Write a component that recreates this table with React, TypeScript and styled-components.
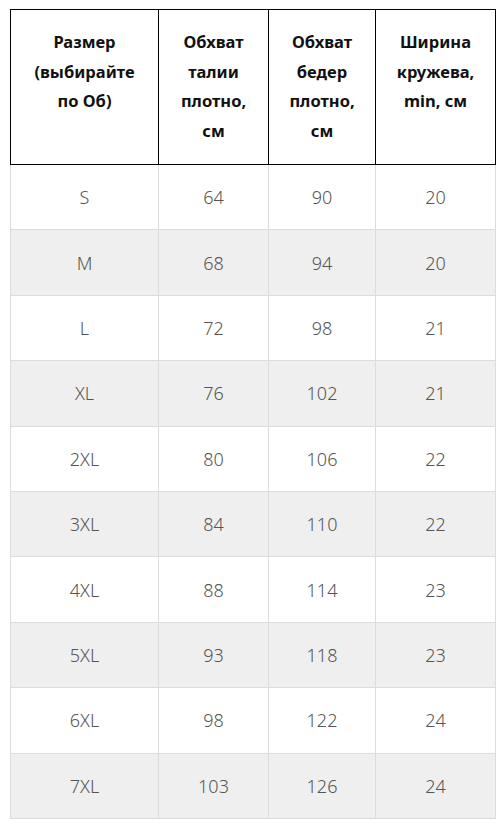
import styled, { createGlobalStyle } from "styled-components";

const GlobalStyle = createGlobalStyle`
  body {
    margin: 0;
    padding: 9px 8px 0 10px;
    background: #fff;
    font-family: "Noto Sans", "Liberation Sans", sans-serif;
  }
`;

interface Row {
  size: string;
  waist: number;
  hips: number;
  lace: number;
}

const rows: Row[] = [
  { size: "S", waist: 64, hips: 90, lace: 20 },
  { size: "M", waist: 68, hips: 94, lace: 20 },
  { size: "L", waist: 72, hips: 98, lace: 21 },
  { size: "XL", waist: 76, hips: 102, lace: 21 },
  { size: "2XL", waist: 80, hips: 106, lace: 22 },
  { size: "3XL", waist: 84, hips: 110, lace: 22 },
  { size: "4XL", waist: 88, hips: 114, lace: 23 },
  { size: "5XL", waist: 93, hips: 118, lace: 23 },
  { size: "6XL", waist: 98, hips: 122, lace: 24 },
  { size: "7XL", waist: 103, hips: 126, lace: 24 },
];

const headers = [
  ["Размер", "(выбирайте", "по Об)"],
  ["Обхват", "талии", "плотно,", "см"],
  ["Обхват", "бедер", "плотно,", "см"],
  ["Ширина", "кружева,", "min, см"],
];

const widths = [148, 110, 107, 120];

const App = () => {
  return (
    <>
      <GlobalStyle />
      <SizeTable>
        <colgroup>
          {widths.map((w, i) => (
            <col key={i} style={{ width: w }} />
          ))}
        </colgroup>
        <thead>
          <tr>
            {headers.map((lines, i) => (
              <HeadCell key={i}>
                {lines.map((l, j) => (
                  <div key={j}>{l}</div>
                ))}
              </HeadCell>
            ))}
          </tr>
        </thead>
        <tbody>
          {rows.map((r, i) => (
            <BodyRow key={r.size} $striped={i % 2 === 1}>
              <Cell>{r.size}</Cell>
              <Cell>{r.waist}</Cell>
              <Cell>{r.hips}</Cell>
              <Cell>{r.lace}</Cell>
            </BodyRow>
          ))}
        </tbody>
      </SizeTable>
    </>
  );
};

const SizeTable = styled.table`
  width: 485px;
  border-collapse: collapse;
  table-layout: fixed;
`;

const HeadCell = styled.th`
  border: 1px solid #000;
  vertical-align: top;
  text-align: center;
  padding: 17px 2px 18px;
  height: 119px;
  font-size: 16.5px;
  font-weight: 700;
  line-height: 29.5px;
  color: #111;
`;

const BodyRow = styled.tr<{ $striped: boolean }>`
  background: ${(p) => (p.$striped ? "#efefef" : "#fff")};
`;

const Cell = styled.td`
  border: 1px solid #dcdcdc;
  height: 64.4px;
  padding: 0;
  text-align: center;
  vertical-align: middle;
  font-size: 18px;
  font-weight: 300;
  color: #555;
`;

export default App;
